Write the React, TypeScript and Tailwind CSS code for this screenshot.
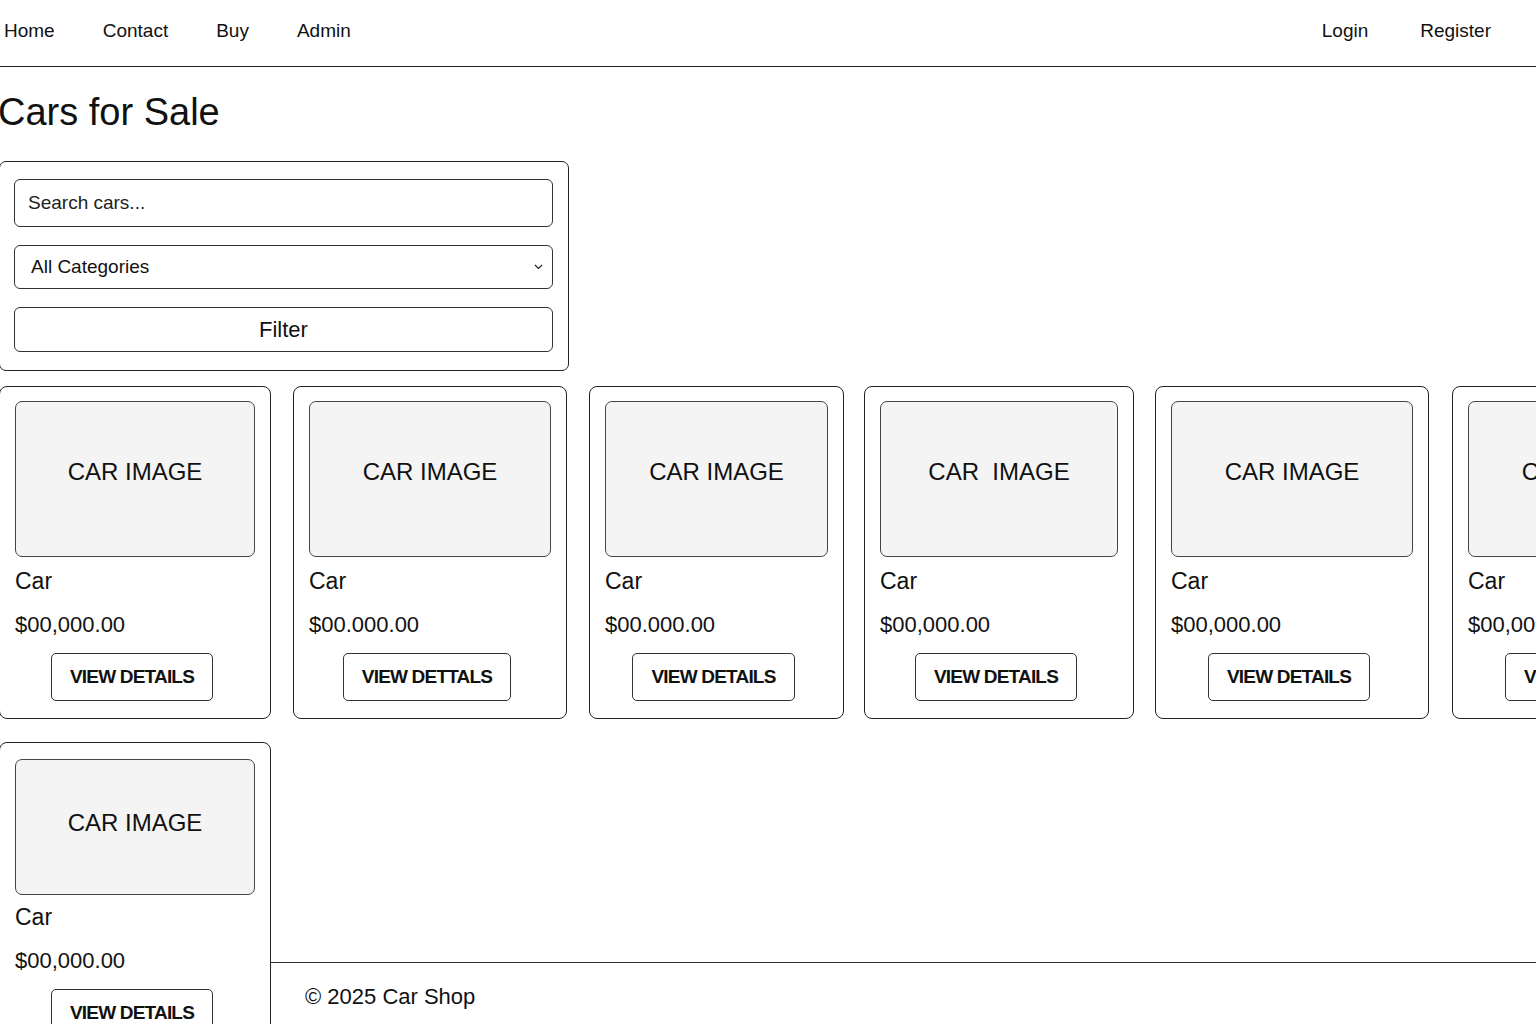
import { ChangeEvent, useState } from "react";

type CarCard = {
  id: number;
  width: string;
  gap: string;
  image: string;
  price: string;
  action: string;
};

const cars: CarCard[] = [
  { id: 1, width: "w-[272px]", gap: "", image: "CAR IMAGE", price: "$00,000.00", action: "VIEW DETAILS" },
  { id: 2, width: "w-[274px]", gap: "ml-[22px]", image: "CAR IMAGE", price: "$00.000.00", action: "VIEW DETTALS" },
  { id: 3, width: "w-[255px]", gap: "ml-[22px]", image: "CAR IMAGE", price: "$00.000.00", action: "VIEW DETAILS" },
  { id: 4, width: "w-[270px]", gap: "ml-[20px]", image: "CAR  IMAGE", price: "$00,000.00", action: "VIEW DETAILS" },
  { id: 5, width: "w-[274px]", gap: "ml-[21px]", image: "CAR IMAGE", price: "$00,000.00", action: "VIEW DETAILS" },
  { id: 6, width: "w-[274px]", gap: "ml-[23px]", image: "CAR IMAGE", price: "$00,000.00", action: "VIEW DETAILS" },
];

const font = "font-['Liberation_Sans',Arial,sans-serif]";

function Card({
  car,
  imageClass,
  nameClass,
}: {
  car: CarCard;
  imageClass: string;
  nameClass: string;
}) {
  return (
    <div
      className={`${car.width} ${car.gap} shrink-0 rounded-[8px] border border-[#222] bg-white px-[15px] pb-[17px]`}
    >
      <div
        className={`${imageClass} flex items-center justify-center rounded-[7px] border border-[#444] bg-[#f4f4f4]`}
      >
        <span className="whitespace-pre text-[24px] leading-[28px] text-[#111]">
          {car.image}
        </span>
      </div>
      <p className={`${nameClass} text-[23px] leading-[28px] text-[#111]`}>Car</p>
      <p className="mt-[17px] text-[22px] leading-[26px] text-[#111]">
        {car.price}
      </p>
      <div className="mt-[15px] flex justify-center">
        <button
          type="button"
          className="mr-[6px] h-[48px] rounded-[5px] border border-[#333] bg-white px-[18px] text-[19px] font-bold tracking-[-0.8px] text-[#111]"
        >
          {car.action}
        </button>
      </div>
    </div>
  );
}

export default function App() {
  const [query, setQuery] = useState("");
  const [category, setCategory] = useState("all");

  return (
    <div className={`${font} min-h-screen bg-white text-[#111]`}>
      <header className="flex h-[67px] items-center justify-between border-b-[1.5px] border-[#222] pb-[4px] pl-[4px] pr-[45px] text-[19px]">
        <nav className="flex gap-[48px]">
          <a href="#">Home</a>
          <a href="#">Contact</a>
          <a href="#">Buy</a>
          <a href="#">Admin</a>
        </nav>
        <nav className="flex gap-[52px]">
          <a href="#">Login</a>
          <a href="#">Register</a>
        </nav>
      </header>

      <main>
        <h1 className="-ml-[2px] mt-[23px] text-[38px] leading-[44px]">
          Cars for Sale
        </h1>

        <form
          className="-ml-px mt-[27px] flex w-[570px] flex-col gap-[18px] rounded-[7px] border border-[#222] px-[14px] pb-[18px] pt-[17px]"
          onSubmit={(e) => e.preventDefault()}
        >
          <input
            value={query}
            onChange={(e: ChangeEvent<HTMLInputElement>) => setQuery(e.target.value)}
            placeholder="Search cars..."
            className="h-[48px] w-[539px] rounded-[6px] border border-[#333] px-[13px] text-[19px] text-[#111] outline-none placeholder:text-[#222]"
          />
          <div className="relative w-[539px]">
            <select
              value={category}
              onChange={(e) => setCategory(e.target.value)}
              className="h-[44px] w-full appearance-none rounded-[6px] border border-[#333] bg-white px-[16px] text-[19px] text-[#111] outline-none"
            >
              <option value="all">All Categories</option>
              <option value="sedan">Sedan</option>
              <option value="suv">SUV</option>
              <option value="truck">Truck</option>
            </select>
            <svg
              className="pointer-events-none absolute right-[10px] top-[19px]"
              width="9"
              height="6"
              viewBox="0 0 9 6"
              fill="none"
            >
              <path d="M1 1l3.5 3.5L8 1" stroke="#222" strokeWidth="1.2" />
            </svg>
          </div>
          <button
            type="submit"
            className="h-[45px] w-[539px] rounded-[6px] border border-[#333] bg-white text-[22px] text-[#111]"
          >
            Filter
          </button>
        </form>

        <div className="-ml-px mt-[15px] flex overflow-hidden">
          {cars.map((car) => (
            <Card
              key={car.id}
              car={car}
              imageClass="mt-[14px] h-[156px] pb-[14px]"
              nameClass="mt-[10px]"
            />
          ))}
        </div>

        <div className="-ml-px mt-[23px] flex items-start">
          <Card
            car={{
              id: 7,
              width: "w-[272px]",
              gap: "",
              image: "CAR IMAGE",
              price: "$00,000.00",
              action: "VIEW DETAILS",
            }}
            imageClass="mt-[16px] h-[136px] pb-[8px]"
            nameClass="mt-[8px]"
          />
          <footer className="mt-[220px] flex-1 border-t-[1.5px] border-[#333] pb-[20px] pl-[34px] pt-[21px] text-[22px] leading-[26px]">
            © 2025 Car Shop
          </footer>
        </div>
      </main>
    </div>
  );
}
